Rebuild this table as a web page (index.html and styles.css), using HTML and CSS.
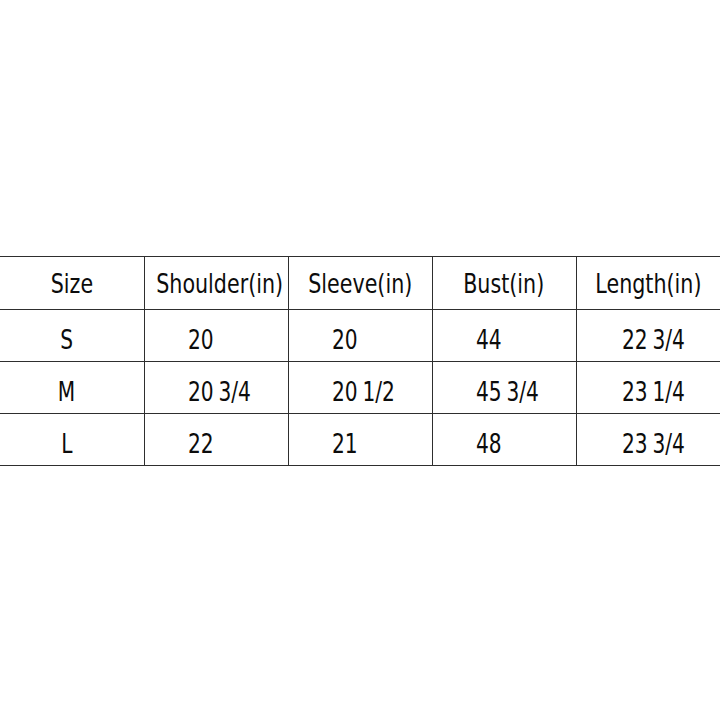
FILE: index.html
```html
<!DOCTYPE html>
<html>
<head>
<meta charset="utf-8">
<link rel="stylesheet" href="styles.css">
</head>
<body>
<main class="page">
  <table class="size-table">
    <thead>
      <tr>
        <th><span class="t">Size</span></th>
        <th><span class="t">Shoulder(in)</span></th>
        <th><span class="t">Sleeve(in)</span></th>
        <th><span class="t">Bust(in)</span></th>
        <th><span class="t">Length(in)</span></th>
      </tr>
    </thead>
    <tbody>
      <tr>
        <td class="size"><span class="t">S</span></td>
        <td><span class="t">20</span></td>
        <td><span class="t">20</span></td>
        <td><span class="t">44</span></td>
        <td><span class="t">22 3/4</span></td>
      </tr>
      <tr>
        <td class="size"><span class="t">M</span></td>
        <td><span class="t">20 3/4</span></td>
        <td><span class="t">20 1/2</span></td>
        <td><span class="t">45 3/4</span></td>
        <td><span class="t">23 1/4</span></td>
      </tr>
      <tr>
        <td class="size"><span class="t">L</span></td>
        <td><span class="t">22</span></td>
        <td><span class="t">21</span></td>
        <td><span class="t">48</span></td>
        <td><span class="t">23 3/4</span></td>
      </tr>
    </tbody>
  </table>
</main>
</body>
</html>
```

FILE: styles.css
```css
html, body {
  margin: 0;
  padding: 0;
  background: #fff;
}

.page {
  padding-top: 256px;
}

.size-table {
  width: 720px;
  table-layout: fixed;
  border-collapse: collapse;
  font-family: "DejaVu Sans Condensed", "DejaVu Sans", sans-serif;
  font-size: 27px;
  color: #0c0c0c;
}

.size-table th,
.size-table td {
  border: 1px solid #2e2e2e;
  padding: 0;
  font-weight: normal;
  line-height: 1;
  box-sizing: border-box;
}

.size-table tr > :first-child {
  border-left: none;
}

.size-table tr > :last-child {
  border-right: none;
}

.t {
  display: inline-block;
  transform: scaleX(0.83);
  transform-origin: center;
  white-space: nowrap;
}

.size-table th {
  height: 53px;
  text-align: center;
  vertical-align: middle;
  padding-top: 1px;
}

.size-table th .t {
  transform: scaleX(0.85);
}

.size-table td {
  height: 52px;
  text-align: left;
  padding-left: 43px;
  padding-top: 7px;
  word-spacing: -2px;
}

.size-table td .t {
  transform-origin: left center;
}

.size-table td.size {
  text-align: center;
  padding-left: 0;
  padding-right: 10px;
}

.size-table td.size .t {
  transform-origin: center;
}

.size-table td:last-child {
  padding-left: 45px;
}
```
